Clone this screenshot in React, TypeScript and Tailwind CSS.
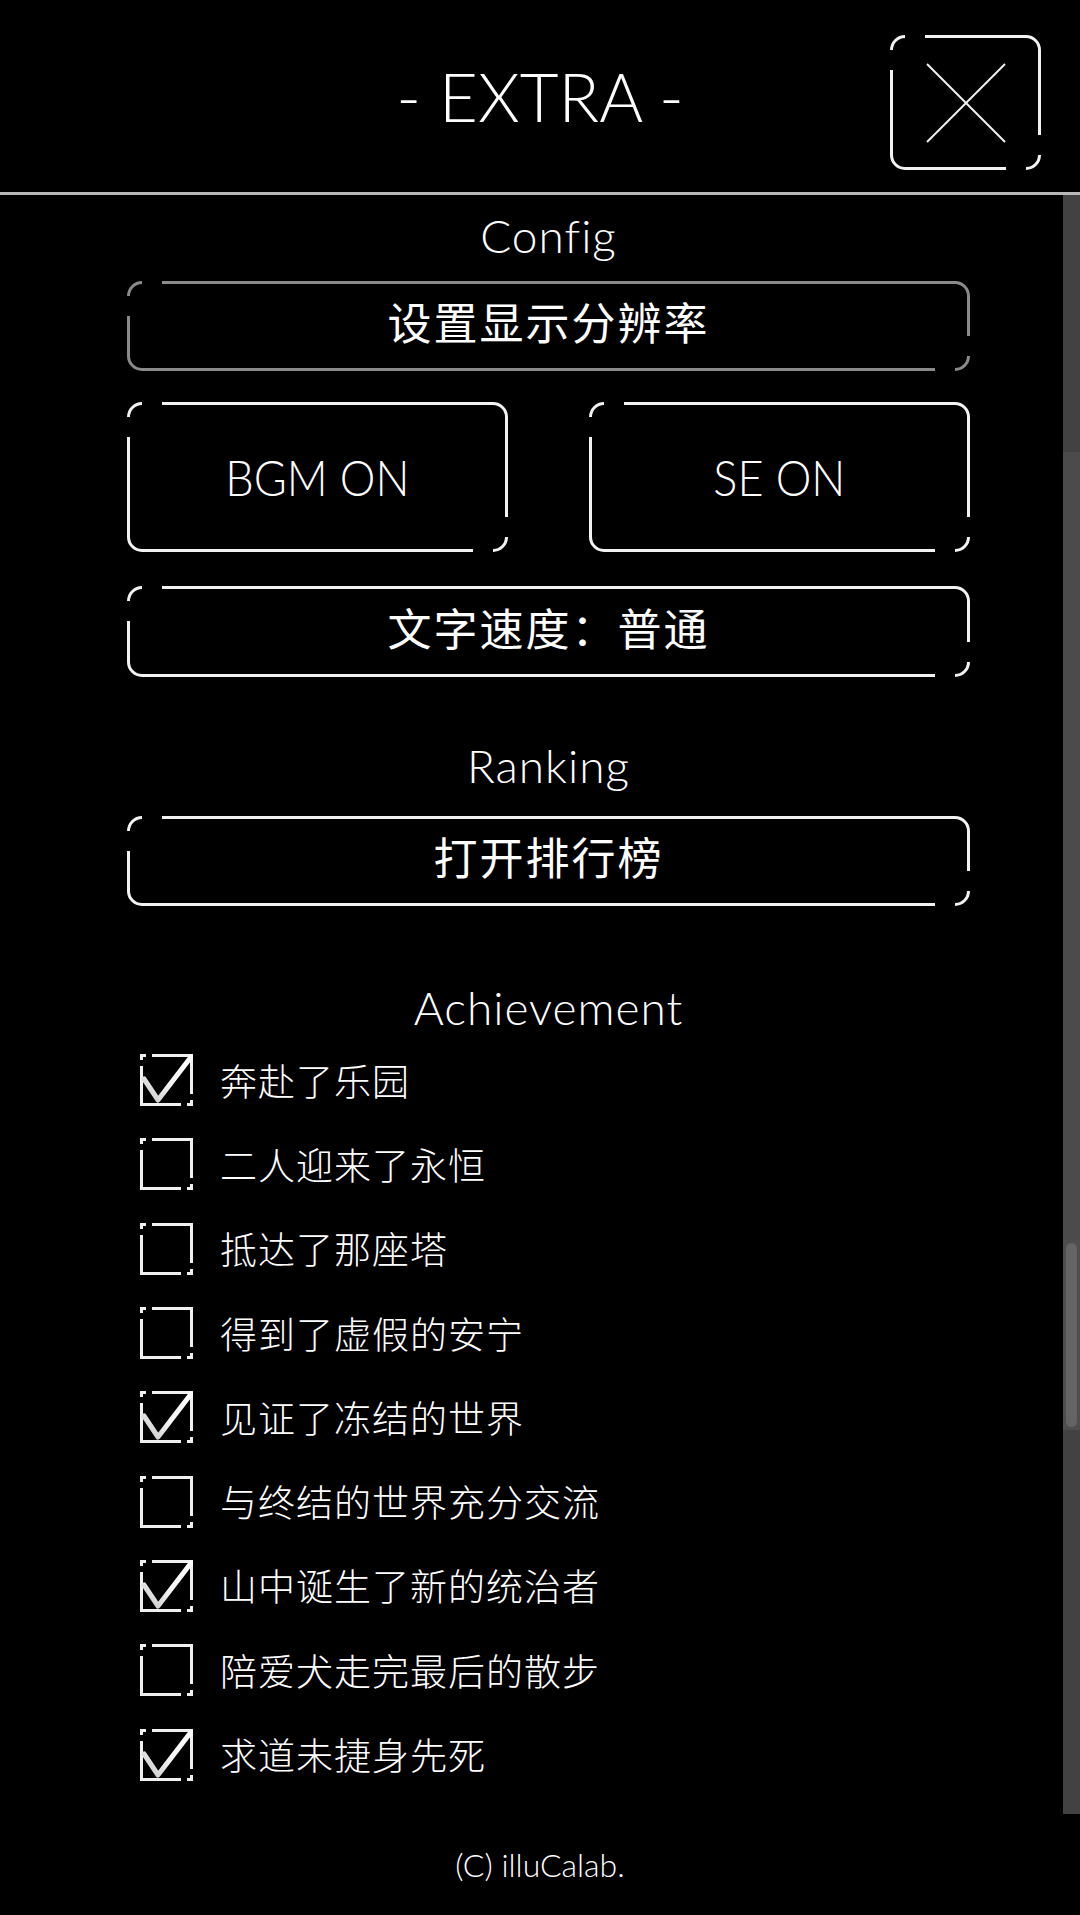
import React from "react";

const LATIN = { fontFamily: "Lato, 'Open Sans', 'Noto Sans CJK SC', sans-serif" };
const CJK = { fontFamily: "'Noto Sans CJK SC', 'Noto Sans', sans-serif" };

function Frame({
  className = "",
  border = "border-[#f2f2f2]",
  children,
}: {
  className?: string;
  border?: string;
  children?: React.ReactNode;
}) {
  return (
    <div className={`relative border-[3px] rounded-[15px] flex items-center justify-center ${border} ${className}`}>
      <span className="absolute top-[-3px] left-[12px] w-[20px] h-[3px] bg-black" />
      <span className="absolute left-[-3px] top-[12px] w-[3px] h-[20px] bg-black" />
      <span className="absolute bottom-[-3px] right-[12px] w-[20px] h-[3px] bg-black" />
      <span className="absolute right-[-3px] bottom-[12px] w-[3px] h-[20px] bg-black" />
      {children}
    </div>
  );
}

function CheckBox({ checked }: { checked: boolean }) {
  return (
    <div className="relative w-[53px] h-[52px] border-[3px] border-[#f0f0f0] shrink-0">
      <span className="absolute top-[-3px] left-[3px] w-[6px] h-[3px] bg-black" />
      <span className="absolute left-[-3px] top-[3px] w-[3px] h-[6px] bg-black" />
      <span className="absolute bottom-[-3px] right-[3px] w-[6px] h-[3px] bg-black" />
      <span className="absolute right-[-3px] bottom-[3px] w-[3px] h-[6px] bg-black" />
      {checked && (
        <svg className="absolute left-[-3px] top-[-3px]" width="53" height="52" viewBox="0 0 53 52">
          <defs>
            <linearGradient id="ck" x1="0" y1="1" x2="1" y2="0">
              <stop offset="0" stopColor="#c8c8c8" />
              <stop offset="0.45" stopColor="#f4f4f4" />
              <stop offset="1" stopColor="#ffffff" />
            </linearGradient>
          </defs>
          <polyline
            points="4,25 18,46 51,3"
            fill="none"
            stroke="url(#ck)"
            strokeWidth="5"
            strokeLinecap="round"
            strokeLinejoin="round"
          />
        </svg>
      )}
    </div>
  );
}

const achievements: [string, boolean][] = [
  ["奔赴了乐园", true],
  ["二人迎来了永恒", false],
  ["抵达了那座塔", false],
  ["得到了虚假的安宁", false],
  ["见证了冻结的世界", true],
  ["与终结的世界充分交流", false],
  ["山中诞生了新的统治者", true],
  ["陪爱犬走完最后的散步", false],
  ["求道未捷身先死", true],
];

function SectionTitle({ children, className = "" }: { children: React.ReactNode; className?: string }) {
  return (
    <div className={`h-[56px] leading-[56px] text-center text-[46px] font-light tracking-[1px] text-white ${className}`} style={LATIN}>
      {children}
    </div>
  );
}

export default function App() {
  return (
    <div className="w-[1080px] h-[1915px] bg-black text-white flex flex-col overflow-hidden">
      {/* Header */}
      <header className="h-[192px] grid grid-cols-[1fr_auto_1fr]">
        <div />
        <div className="flex items-center justify-center">
          <span className="text-[67px] font-light tracking-[0px] leading-none text-white" style={LATIN}>
            - EXTRA -
          </span>
        </div>
        <div className="flex justify-end items-start pt-[35px] pr-[39px]">
          <Frame className="w-[151px] h-[135px]">
            <svg width="80" height="80" viewBox="0 0 80 80">
              <line x1="1" y1="1" x2="79" y2="79" stroke="#f2f2f2" strokeWidth="2" />
              <line x1="79" y1="1" x2="1" y2="79" stroke="#f2f2f2" strokeWidth="2" />
            </svg>
          </Frame>
        </div>
      </header>
      <div className="h-[3px] bg-[#b8b8b8]" />

      {/* Body */}
      <div className="h-[1619px] flex">
        <main className="flex-1 pl-[127px] pr-[93px] flex flex-col">
          <SectionTitle className="mt-[13px]">Config</SectionTitle>
          <Frame className="mt-[17px] h-[90px] pb-[10px]" border="border-[#8a8a8a]">
            <span className="text-[44px] font-normal tracking-[2px] leading-none" style={CJK}>设置显示分辨率</span>
          </Frame>
          <div className="mt-[31px] h-[150px] flex justify-between">
            <Frame className="w-[381px] h-[150px]">
              <span className="inline-block text-[50px] font-light leading-none scale-x-90" style={LATIN}>BGM ON</span>
            </Frame>
            <Frame className="w-[381px] h-[150px]">
              <span className="inline-block text-[50px] font-light leading-none scale-x-90" style={LATIN}>SE ON</span>
            </Frame>
          </div>
          <Frame className="mt-[34px] h-[91px] pb-[10px]">
            <span className="text-[44px] font-normal tracking-[2px] leading-none" style={CJK}>文字速度：普通</span>
          </Frame>

          <SectionTitle className="mt-[61px]">Ranking</SectionTitle>
          <Frame className="mt-[22px] h-[90px] pb-[10px]">
            <span className="text-[44px] font-normal tracking-[2px] leading-none" style={CJK}>打开排行榜</span>
          </Frame>

          <SectionTitle className="mt-[74px]">Achievement</SectionTitle>
          <ul className="mt-[2px] pl-[13px] flex flex-col">
            {achievements.map(([label, checked]) => (
              <li key={label} className="h-[84.3px] flex items-center gap-[27px]">
                <CheckBox checked={checked} />
                <span className="text-[37px] font-light leading-none tracking-[1px] text-white" style={CJK}>
                  {label}
                </span>
              </li>
            ))}
          </ul>
        </main>

        {/* Scrollbar */}
        <div className="w-[17px] flex flex-col">
          <div className="h-[257px] bg-[#424242]" />
          <div className="h-[788px] bg-[#4b4b4b]" />
          <div className="h-[190px] bg-[#4e4e4e] p-[3px] flex">
            <div className="flex-1 rounded-[6px] bg-[#646464]" />
          </div>
          <div className="flex-1 bg-[#424242]" />
        </div>
      </div>

      {/* Footer */}
      <footer className="flex-1 flex items-center justify-center">
        <span className="text-[32px] font-light leading-none text-white" style={LATIN}>
          (C) illuCalab.
        </span>
      </footer>
    </div>
  );
}
